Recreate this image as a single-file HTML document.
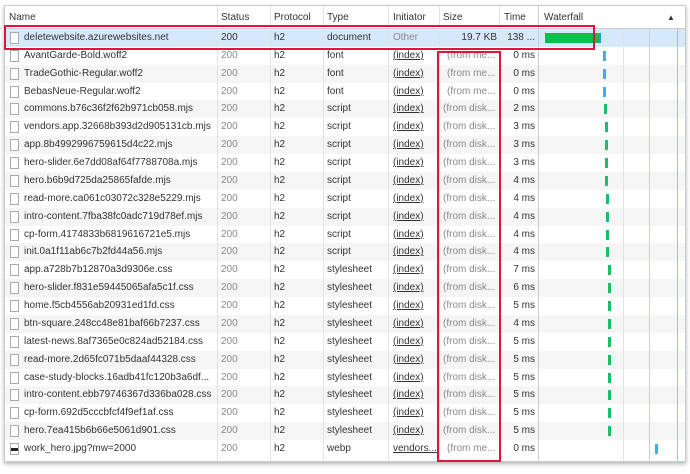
<!DOCTYPE html>
<html><head><meta charset="utf-8"><style>
*{margin:0;padding:0;box-sizing:border-box}
body{width:690px;height:474px;background:#fff;font-family:"Liberation Sans",sans-serif;font-size:10px;color:#333;position:relative;overflow:hidden}
#t{position:absolute;left:4px;top:5px;width:682px;height:457px;border:1px solid #ccc;box-shadow:0 2px 4px rgba(0,0,0,.3);background:#fff;overflow:hidden}
.vl{position:absolute;top:0;bottom:0;width:1px;background:#e2e2e2}
.hd{position:absolute;left:0;right:0;top:0;height:23px;border-bottom:1px solid #ccc;background:#fff}
.hd span{position:absolute;top:6px;color:#333}
.r{position:absolute;left:0;right:0;height:17.87px;line-height:17.87px;white-space:nowrap}
.r.s{background:#f5f5f5}
.r.sel{background:#d6e9fb}
.r span{position:absolute;top:0;overflow:hidden}
.ic{position:absolute;left:5px;top:3px;width:9px;height:12px;border:1px solid #aaa;background:#fff}
.g{color:#888}
.u{text-decoration:underline}
.b{position:absolute;top:4px;height:10px;width:3px}
</style></head><body>
<div id="t">
<div class="hd">
<span style="left:4px">Name</span><span style="left:216px">Status</span><span style="left:269px">Protocol</span><span style="left:322px">Type</span><span style="left:388px">Initiator</span><span style="left:438px">Size</span><span style="left:499px">Time</span><span style="left:539px">Waterfall</span><span style="left:662px;font-size:8px;top:7px">▲</span>
</div>
<div id="rows"></div>
<div class="vl" style="left:212px"></div><div class="vl" style="left:265px"></div><div class="vl" style="left:318px"></div><div class="vl" style="left:383px"></div><div class="vl" style="left:434px"></div><div class="vl" style="left:494px"></div><div class="vl" style="left:533px;background:#ccc"></div>
<div class="vl" style="left:618px;top:23px"></div><div class="vl" style="left:644px;top:23px;background:#c8c8ff"></div><div class="vl" style="left:672px;top:23px;background:#f5a0a0"></div>
</div>
<div style="position:absolute;left:4px;top:25px;width:591px;height:25px;border:2px solid #e0143c"></div>
<div style="position:absolute;left:437px;top:51px;width:64px;height:411px;border:2px solid #e0143c"></div>
<script>
var d=[
["deletewebsite.azurewebsites.net","document","Other","19.7 KB","138 ...",0,""],
["AvantGarde-Bold.woff2","font","(index)","(from me...","0 ms",598,"#3ab0f0"],
["TradeGothic-Regular.woff2","font","(index)","(from me...","0 ms",598,"#3ab0f0"],
["BebasNeue-Regular.woff2","font","(index)","(from me...","0 ms",598,"#3ab0f0"],
["commons.b76c36f2f62b971cb058.mjs","script","(index)","(from disk...","2 ms",599,"#1bbf6a"],
["vendors.app.32668b393d2d905131cb.mjs","script","(index)","(from disk...","3 ms",600,"#1bbf6a"],
["app.8b4992996759615d4c22.mjs","script","(index)","(from disk...","3 ms",600,"#1bbf6a"],
["hero-slider.6e7dd08af64f7788708a.mjs","script","(index)","(from disk...","3 ms",600,"#1bbf6a"],
["hero.b6b9d725da25865fafde.mjs","script","(index)","(from disk...","4 ms",600,"#1bbf6a"],
["read-more.ca061c03072c328e5229.mjs","script","(index)","(from disk...","4 ms",601,"#1bbf6a"],
["intro-content.7fba38fc0adc719d78ef.mjs","script","(index)","(from disk...","4 ms",601,"#1bbf6a"],
["cp-form.4174833b6819616721e5.mjs","script","(index)","(from disk...","4 ms",601,"#1bbf6a"],
["init.0a1f11ab6c7b2fd44a56.mjs","script","(index)","(from disk...","4 ms",601,"#1bbf6a"],
["app.a728b7b12870a3d9306e.css","stylesheet","(index)","(from disk...","7 ms",603,"#1bbf6a"],
["hero-slider.f831e59445065afa5c1f.css","stylesheet","(index)","(from disk...","6 ms",603,"#1bbf6a"],
["home.f5cb4556ab20931ed1fd.css","stylesheet","(index)","(from disk...","5 ms",603,"#1bbf6a"],
["btn-square.248cc48e81baf66b7237.css","stylesheet","(index)","(from disk...","4 ms",603,"#1bbf6a"],
["latest-news.8af7365e0c824ad52184.css","stylesheet","(index)","(from disk...","5 ms",603,"#1bbf6a"],
["read-more.2d65fc071b5daaf44328.css","stylesheet","(index)","(from disk...","5 ms",603,"#1bbf6a"],
["case-study-blocks.16adb41fc120b3a6df...","stylesheet","(index)","(from disk...","5 ms",603,"#1bbf6a"],
["intro-content.ebb79746367d336ba028.css","stylesheet","(index)","(from disk...","5 ms",603,"#1bbf6a"],
["cp-form.692d5cccbfcf4f9ef1af.css","stylesheet","(index)","(from disk...","5 ms",603,"#1bbf6a"],
["hero.7ea415b6b66e5061d901.css","stylesheet","(index)","(from disk...","5 ms",603,"#1bbf6a"],
["work_hero.jpg?mw=2000","webp","vendors...","(from me...","0 ms",650,"#3ab0f0"]];
var h="";
d.forEach(function(x,i){
var top=23+i*17.87,cls="r"+(i==0?" sel":(i%2==1?"":" s"));
var g=i==0?"":" g";
h+='<div class="'+cls+'" style="top:'+top+'px">';
h+='<div class="ic"'+(i==23?' style="background:linear-gradient(#fff 4px,#222 4px,#222 7px,#fff 7px)"':'')+'></div>';
h+='<span style="left:19px;width:192px">'+x[0]+'</span>';
h+='<span class="'+g+'" style="left:216px">200</span><span style="left:269px">h2</span><span style="left:322px">'+x[1]+'</span>';
h+='<span class="'+(i==0?'g':'u')+'" style="left:388px">'+x[2]+'</span>';
if(i==0)h+='<span style="right:188px">'+x[3]+'</span>';
else h+='<span class="g" style="left:'+(x[3].indexOf("me")>0?442:438)+'px">'+x[3]+'</span>';
h+='<span style="right:150px">'+x[4]+'</span>';
if(i==0)h+='<div class="b" style="left:540px;width:54px;background:#0bbf4a"></div><div class="b" style="left:594px;width:2px;background:#2a9ad8"></div>';
else h+='<div class="b" style="left:'+x[5]+'px;background:'+x[6]+'"></div>';
h+='</div>';});
document.getElementById("rows").innerHTML=h;
</script>
</body></html>
